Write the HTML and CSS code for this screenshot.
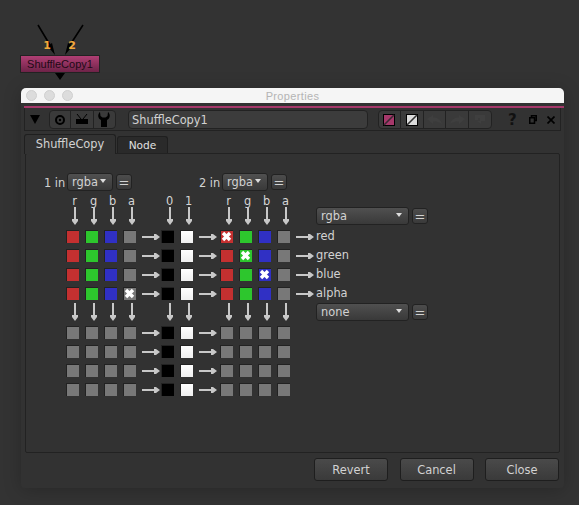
FILE: index.html
```html
<!DOCTYPE html>
<html lang="en">
<head>
<meta charset="utf-8">
<title>ShuffleCopy1 Properties</title>
<link rel="stylesheet" href="styles.css">
</head>
<body>
<div class="node-wrap">
  <svg class="wires" width="100" height="82" viewBox="0 0 100 82">
    <path d="M38 25 L50 45M83 25 L70 45" stroke="#000" stroke-width="1.6" fill="none"/>
    <path d="M55 55 L47.500 46 L52 43ZM65 55 L68 43 L72.500 46ZM55 73 H65 L60 80Z" fill="#000"/>
    <text class="wire-num" x="47" y="49">1</text>
    <text class="wire-num" x="72" y="49">2</text>
  </svg>
  <div class="node">ShuffleCopy1</div>
</div>

<div class="window">
  <div class="titlebar">
    <div class="lights"><i></i><i></i><i></i></div>
    <div class="title">Properties</div>
  </div>
  <div class="accent"></div>
  <div class="toolbar">
    <svg class="collapse" width="10" height="9" viewBox="0 0 10 9"><path d="M0 0H10L5 9Z" fill="#000"/></svg>
    <div class="btn-group first">
      <div class="tb"><svg width="12" height="12" viewBox="0 0 12 12"><circle cx="6" cy="6" r="4" fill="none" stroke="#000" stroke-width="2"/><circle cx="6" cy="6" r="1.2" fill="#000"/></svg></div>
      <div class="tb"><svg width="14" height="12" viewBox="0 0 14 12"><path d="M1 5H13V10H1Z" fill="#000"/><path d="M2 0 L6 5M12 0 L8 5" stroke="#000" stroke-width="1"/></svg></div>
      <div class="tb"><svg width="14" height="15" viewBox="0 0 14 15"><path d="M3 0C0.5 2 0.5 6.5 4 8V15H10V8C13.500 6.500 13.500 2 11 0L10.500 4L8.500 5.500H5.500L3.500 4Z" fill="#000"/></svg></div>
    </div>
    <div class="name">ShuffleCopy1</div>
    <div class="btn-group second">
      <div class="tb"><svg width="12" height="12" viewBox="0 0 12 12"><rect x=".5" y=".5" width="11" height="11" fill="#a5386a" stroke="#000"/><path d="M1 11 11 1" stroke="#3a2a32" stroke-width="1.600"/></svg></div>
      <div class="tb"><svg width="12" height="12" viewBox="0 0 12 12"><rect x=".5" y=".5" width="11" height="11" fill="#dcdcdc" stroke="#000"/><path d="M1 11 11 1" stroke="#333" stroke-width="1.600"/></svg></div>
      <div class="tb"><svg width="15" height="10" viewBox="0 0 15 10"><path d="M0 4L6 0V2.500C10 2.500 13.500 4 15 9C12.500 7 9.500 6.500 6 6.500V9Z" fill="#3f3f3f"/></svg></div>
      <div class="tb"><svg width="15" height="10" viewBox="0 0 15 10"><path d="M15 4L9 0V2.500C5 2.500 1.500 4 0 9C2.500 7 5.500 6.500 9 6.500V9Z" fill="#3f3f3f"/></svg></div>
      <div class="tb"><svg width="12" height="12" viewBox="0 0 12 12"><path d="M1 1H11V7H7V10L3 7H6V4H4V6H1Z" fill="#3f3f3f"/></svg></div>
    </div>
    <div class="help">?</div>
    <svg class="restore" width="8" height="9" viewBox="0 0 8 9"><path d="M2.500 2V.75H7.250V5.500H5.500M.75 2.750H5.500V8.250H.75Z" fill="none" stroke="#000" stroke-width="1.500"/></svg>
    <svg class="close-x" width="8" height="8" viewBox="0 0 8 8"><path d="M.5 .5 7.500 7.500M7.500 .5 .5 7.500" stroke="#000" stroke-width="1.700"/></svg>
  </div>

  <div class="tabs">
    <div class="tab active">ShuffleCopy</div>
    <div class="tab">Node</div>
  </div>

  <div class="pane">
    <div class="matrix">
      <div class="in-one"><span>1 in</span><div class="sel small">rgba</div><div class="eq">=</div></div>
      <div class="in-two"><span>2 in</span><div class="sel small">rgba</div><div class="eq">=</div></div>

      <div class="lab c2">r</div><div class="lab">g</div><div class="lab">b</div><div class="lab">a</div>
      <div class="lab c7">0</div><div class="lab">1</div>
      <div class="lab c10">r</div><div class="lab">g</div><div class="lab">b</div><div class="lab">a</div>

      <div class="cell c2"><b class="ad"></b></div><div class="cell"><b class="ad"></b></div><div class="cell"><b class="ad"></b></div><div class="cell"><b class="ad"></b></div>
      <div class="cell c7"><b class="ad"></b></div><div class="cell"><b class="ad"></b></div>
      <div class="cell c10"><b class="ad"></b></div><div class="cell"><b class="ad"></b></div><div class="cell"><b class="ad"></b></div><div class="cell"><b class="ad"></b></div>
      <div class="pick c15"><div class="sel wide">rgba</div><div class="eq">=</div></div>

      <div class="cell c2"><b class="sw red"></b></div><div class="cell"><b class="sw green"></b></div><div class="cell"><b class="sw blue"></b></div><div class="cell"><b class="sw grey"></b></div>
      <div class="cell"><b class="ar"></b></div><div class="cell"><b class="sw black"></b></div><div class="cell"><b class="sw white"></b></div><div class="cell"><b class="ar"></b></div>
      <div class="cell"><b class="sw red"><svg viewBox="0 0 13 13"><path d="M3 3 10 10M10 3 3 10"/></svg></b></div><div class="cell"><b class="sw green"></b></div><div class="cell"><b class="sw blue"></b></div><div class="cell"><b class="sw grey"></b></div>
      <div class="cell"><b class="ar"></b></div><div class="out">red</div>

      <div class="cell c2"><b class="sw red"></b></div><div class="cell"><b class="sw green"></b></div><div class="cell"><b class="sw blue"></b></div><div class="cell"><b class="sw grey"></b></div>
      <div class="cell"><b class="ar"></b></div><div class="cell"><b class="sw black"></b></div><div class="cell"><b class="sw white"></b></div><div class="cell"><b class="ar"></b></div>
      <div class="cell"><b class="sw red"></b></div><div class="cell"><b class="sw green"><svg viewBox="0 0 13 13"><path d="M3 3 10 10M10 3 3 10"/></svg></b></div><div class="cell"><b class="sw blue"></b></div><div class="cell"><b class="sw grey"></b></div>
      <div class="cell"><b class="ar"></b></div><div class="out">green</div>

      <div class="cell c2"><b class="sw red"></b></div><div class="cell"><b class="sw green"></b></div><div class="cell"><b class="sw blue"></b></div><div class="cell"><b class="sw grey"></b></div>
      <div class="cell"><b class="ar"></b></div><div class="cell"><b class="sw black"></b></div><div class="cell"><b class="sw white"></b></div><div class="cell"><b class="ar"></b></div>
      <div class="cell"><b class="sw red"></b></div><div class="cell"><b class="sw green"></b></div><div class="cell"><b class="sw blue"><svg viewBox="0 0 13 13"><path d="M3 3 10 10M10 3 3 10"/></svg></b></div><div class="cell"><b class="sw grey"></b></div>
      <div class="cell"><b class="ar"></b></div><div class="out">blue</div>

      <div class="cell c2"><b class="sw red"></b></div><div class="cell"><b class="sw green"></b></div><div class="cell"><b class="sw blue"></b></div><div class="cell"><b class="sw grey"><svg viewBox="0 0 13 13"><path d="M3 3 10 10M10 3 3 10"/></svg></b></div>
      <div class="cell"><b class="ar"></b></div><div class="cell"><b class="sw black"></b></div><div class="cell"><b class="sw white"></b></div><div class="cell"><b class="ar"></b></div>
      <div class="cell"><b class="sw red"></b></div><div class="cell"><b class="sw green"></b></div><div class="cell"><b class="sw blue"></b></div><div class="cell"><b class="sw grey"></b></div>
      <div class="cell"><b class="ar"></b></div><div class="out">alpha</div>

      <div class="cell c2"><b class="ad"></b></div><div class="cell"><b class="ad"></b></div><div class="cell"><b class="ad"></b></div><div class="cell"><b class="ad"></b></div>
      <div class="cell c7"><b class="ad"></b></div><div class="cell"><b class="ad"></b></div>
      <div class="cell c10"><b class="ad"></b></div><div class="cell"><b class="ad"></b></div><div class="cell"><b class="ad"></b></div><div class="cell"><b class="ad"></b></div>
      <div class="pick c15"><div class="sel wide">none</div><div class="eq">=</div></div>

      <div class="cell c2"><b class="sw grey"></b></div><div class="cell"><b class="sw grey"></b></div><div class="cell"><b class="sw grey"></b></div><div class="cell"><b class="sw grey"></b></div>
      <div class="cell"><b class="ar"></b></div><div class="cell"><b class="sw black"></b></div><div class="cell"><b class="sw white"></b></div><div class="cell"><b class="ar"></b></div>
      <div class="cell"><b class="sw grey"></b></div><div class="cell"><b class="sw grey"></b></div><div class="cell"><b class="sw grey"></b></div><div class="cell"><b class="sw grey"></b></div>

      <div class="cell c2"><b class="sw grey"></b></div><div class="cell"><b class="sw grey"></b></div><div class="cell"><b class="sw grey"></b></div><div class="cell"><b class="sw grey"></b></div>
      <div class="cell"><b class="ar"></b></div><div class="cell"><b class="sw black"></b></div><div class="cell"><b class="sw white"></b></div><div class="cell"><b class="ar"></b></div>
      <div class="cell"><b class="sw grey"></b></div><div class="cell"><b class="sw grey"></b></div><div class="cell"><b class="sw grey"></b></div><div class="cell"><b class="sw grey"></b></div>

      <div class="cell c2"><b class="sw grey"></b></div><div class="cell"><b class="sw grey"></b></div><div class="cell"><b class="sw grey"></b></div><div class="cell"><b class="sw grey"></b></div>
      <div class="cell"><b class="ar"></b></div><div class="cell"><b class="sw black"></b></div><div class="cell"><b class="sw white"></b></div><div class="cell"><b class="ar"></b></div>
      <div class="cell"><b class="sw grey"></b></div><div class="cell"><b class="sw grey"></b></div><div class="cell"><b class="sw grey"></b></div><div class="cell"><b class="sw grey"></b></div>

      <div class="cell c2"><b class="sw grey"></b></div><div class="cell"><b class="sw grey"></b></div><div class="cell"><b class="sw grey"></b></div><div class="cell"><b class="sw grey"></b></div>
      <div class="cell"><b class="ar"></b></div><div class="cell"><b class="sw black"></b></div><div class="cell"><b class="sw white"></b></div><div class="cell"><b class="ar"></b></div>
      <div class="cell"><b class="sw grey"></b></div><div class="cell"><b class="sw grey"></b></div><div class="cell"><b class="sw grey"></b></div><div class="cell"><b class="sw grey"></b></div>
    </div>
  </div>

  <div class="footer">
    <div class="btn">Revert</div>
    <div class="btn">Cancel</div>
    <div class="btn">Close</div>
  </div>
</div>
</body>
</html>
```
FILE: styles.css
```css
* { box-sizing: border-box; }
html, body { margin: 0; height: 505px; overflow: hidden; }
body {
  background: #333;
  color: #d2d2d2;
  font: 11.4px/1 "DejaVu Sans", sans-serif;
  padding: 88px 0 0 21px;
}

/* free-canvas node graph */
.node-wrap { position: absolute; left: 0; top: 0; width: 100px; height: 82px; }
.wires { display: block; }
.wire-num { font: bold 11px "DejaVu Sans", sans-serif; fill: #f2a93c; text-anchor: middle; }
.node {
  position: absolute; left: 20px; top: 55px; width: 80px; height: 18px;
  background: linear-gradient(#b03f74, #6e2348);
  border: 1px solid #222;
  color: #1e0a16;
  font: 11px "Liberation Sans", sans-serif;
  display: flex; align-items: center; justify-content: center;
}

.window {
  width: 543px; height: 400px;
  background: #323232;
  border-radius: 5px 5px 4px 4px;
  box-shadow: 0 2px 18px rgba(0,0,0,.22);
  display: flex; flex-direction: column;
}
.titlebar {
  height: 15px; flex: none;
  background: #f5f5f5;
  border-radius: 5px 5px 0 0;
  position: relative;
  display: flex; align-items: center; justify-content: center;
}
.lights { position: absolute; left: 5px; top: 2px; display: flex; gap: 7px; }
.lights i { width: 11px; height: 11px; border-radius: 50%; background: #dcdcdc; border: 1px solid #d0d0d0; display: block; }
.title { font: 11px "Liberation Sans", sans-serif; letter-spacing: .35px; color: #b4b4b4; }
.accent { height: 2px; margin: 3px 0 0 3px; background: #a5386a; flex: none; }

.toolbar {
  height: 23px; flex: none;
  margin: 0 3px;
  border: 1px solid #222;
  border-top: 0;
  display: flex; align-items: center;
  padding: 1px 0 0 5px;
}
.collapse { margin-right: 9px; }
.btn-group {
  height: 19px;
  display: flex;
  border: 1px solid #222;
  border-radius: 4px;
  background: #3a3a3a;
}
.tb { display: flex; align-items: center; justify-content: center; border-left: 1px solid #222; }
.tb:first-child { border-left: 0; }
.first { width: 67px; }
.first .tb { width: 23px; }
.first .tb:first-child { width: 21px; }
.second { width: 114px; margin-left: 10px; }
.second .tb { width: 23px; }
.second .tb:first-child { width: 21px; }
.name {
  width: 240px; height: 19px;
  margin-left: 12px;
  border: 1px solid #222;
  border-radius: 4px;
  background: #3c3c3c;
  padding: 2px 0 0 3px;
  display: flex; align-items: center;
}
.help { margin-left: 16px; width: 8px; color: #111; font: bold 15px "DejaVu Sans", sans-serif; }
.restore { margin-left: 13px; }
.close-x { margin-left: 10px; }

.tabs { height: 23px; flex: none; margin-left: 3px; padding-top: 3px; display: flex; align-items: flex-end; position: relative; z-index: 1; }
.tab {
  height: 17px; width: 51px; margin-left: 1px;
  padding-top: 1px;
  background: #2a2a2a;
  border: 1px solid #1f1f1f;
  border-bottom: 0;
  border-radius: 3px 3px 0 0;
  display: flex; align-items: center; justify-content: center;
  font-size: 10.600px; color: #e0e0e0;
  margin-bottom: 1px;
}
.tab.active {
  height: 20px; width: 92px; margin-left: 0; margin-bottom: 0;
  background: #323232;
  font-size: 11.400px; color: #d2d2d2;
}

.pane {
  height: 300px; flex: none;
  margin: -1px 4px 0 4px;
  border: 1px solid #222;
  border-radius: 2px;
  padding: 18px 0 0 18px;
}
.matrix {
  display: grid;
  grid-template-columns: 19px repeat(4, 19px) 19px 19px 19px 21px repeat(4, 19px) 23px auto;
  grid-template-rows: 20px 15px 20px repeat(4, 19px) 20px repeat(4, 19px);
}
.c2 { grid-column-start: 2; }
.c7 { grid-column-start: 7; }
.c10 { grid-column-start: 10; }
.c15 { grid-column-start: 15; }

.in-one, .in-two, .pick { display: flex; gap: 3px; align-items: flex-start; }
.in-one { grid-column: 1 / 9; padding-top: 1px; }
.in-two { grid-column: 9 / 15; padding: 1px 0 0 3px; }
.in-one span, .in-two span { line-height: 20px; width: 20px; white-space: nowrap; }
.sel {
  height: 18px;
  background: linear-gradient(#505050, #393939);
  border: 1px solid #222;
  border-radius: 3px;
  padding: 2px 6px 0 4px;
  display: flex; align-items: center; justify-content: space-between;
}
.sel::after {
  content: ""; width: 0; height: 0;
  border: 3px solid transparent; border-top: 4px solid #ddd; border-bottom: 0;
  margin-top: -4px;
}
.small { width: 46px; }
.wide { width: 93px; }
.eq {
  width: 16px; height: 16px; margin-top: 1px;
  background: linear-gradient(#4c4c4c, #3a3a3a);
  border: 1px solid #222;
  border-radius: 3px;
  display: flex; align-items: center; justify-content: center;
  font-size: 13px;
}

.lab { text-align: center; padding: 2px 0 0 4px; line-height: 15px; height: 15px; color: #d6d6d6; }
.cell { display: flex; }
.out { line-height: 19px; margin-top: 0; }

.ad {
  display: block; width: 6px; height: 18px; margin-left: 9px;
  background: #c8c8c8;
  clip-path: polygon(2px 0, 4px 0, 4px 12px, 6px 12px, 6px 14px, 3px 18px, 0 14px, 0 12px, 2px 12px);
}
.ar {
  display: block; width: 18px; height: 6px; margin: 7px 0 0 3px; flex: none;
  background: #c8c8c8;
  clip-path: polygon(0 2px, 12px 2px, 12px 0, 14px 0, 18px 3px, 14px 6px, 12px 6px, 12px 4px, 0 4px);
}
.sw {
  display: block; width: 13px; height: 13px; margin: 3px 0 0 3px; flex: none;
  border-top: 1px solid #222; border-left: 1px solid #222;
}
.sw svg { display: block; width: 13px; height: 13px; margin: -1px 0 0 -1px; fill: none; stroke: #fff; stroke-width: 3.400; }
.red { background: #c43030; }
.green { background: #2dc62d; }
.blue { background: #3030c4; }
.grey { background: #787878; }
.black { background: #000; }
.white { background: linear-gradient(#fff, #efefef); }

.footer { flex: 1; display: flex; justify-content: flex-end; gap: 11.500px; padding: 5px 5px 0 0; }
.btn {
  width: 74px; height: 23px;
  padding-top: 2px;
  background: linear-gradient(#4a4a4a, #3a3a3a);
  border: 1px solid #1e1e1e;
  border-radius: 3px;
  display: flex; align-items: center; justify-content: center;
}
```
